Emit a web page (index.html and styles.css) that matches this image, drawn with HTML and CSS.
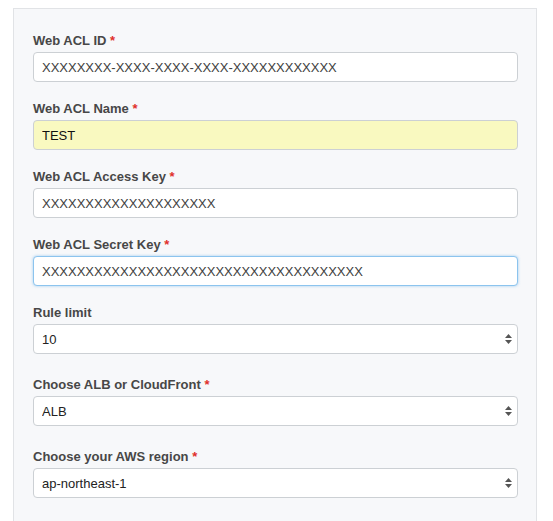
FILE: index.html
```html
<!DOCTYPE html>
<html>
<head>
    <title>Web ACL settings</title>
    <meta http-equiv="Content-Type" content="text/html; charset=utf-8"/>
    <link rel="stylesheet" href="styles.css">
</head>
<body>
<div id="page">
    <form id="aclPanel">
        <div class="field">
            <label>Web ACL ID <span class="req">*</span></label>
            <input class="control" type="text" value="XXXXXXXX-XXXX-XXXX-XXXX-XXXXXXXXXXXX">
        </div>
        <div class="field">
            <label>Web ACL Name <span class="req">*</span></label>
            <input class="control filled" type="text" value="TEST">
        </div>
        <div class="field">
            <label>Web ACL Access Key <span class="req">*</span></label>
            <input class="control" type="text" value="XXXXXXXXXXXXXXXXXXXX">
        </div>
        <div class="field">
            <label>Web ACL Secret Key <span class="req">*</span></label>
            <input class="control focused" type="text" value="XXXXXXXXXXXXXXXXXXXXXXXXXXXXXXXXXXXXX">
        </div>
        <div class="field choice">
            <label>Rule limit</label>
            <select class="control">
                <option>10</option>
            </select>
        </div>
        <div class="field choice">
            <label>Choose ALB or CloudFront <span class="req">*</span></label>
            <select class="control">
                <option>ALB</option>
            </select>
        </div>
        <div class="field choice">
            <label>Choose your AWS region <span class="req">*</span></label>
            <select class="control">
                <option>ap-northeast-1</option>
            </select>
        </div>
    </form>
</div>
</body>
</html>
```

FILE: styles.css
```css
body {
    margin: 0;
    background-color: #fff;
    font-family: "Liberation Sans", Arial, sans-serif;
}

#page {
    padding: 8px 16px 0 13px;
}

#aclPanel {
    background-color: #f7f8fa;
    border: 1px solid #e1e3e6;
    border-bottom: none;
    padding: 24px 18px 20px 19px;
    min-height: 480px;
}

.field {
    display: flex;
    flex-direction: column;
    margin-bottom: 19px;
}

.field.choice {
    margin-bottom: 23px;
}

.field label {
    font-size: 13px;
    font-weight: bold;
    line-height: 16px;
    color: #474747;
    margin-bottom: 3px;
}

.req {
    color: #e0302b;
}

.control {
    box-sizing: border-box;
    height: 30px;
    width: 100%;
    margin: 0;
    padding: 0 8px;
    font-family: "Liberation Sans", Arial, sans-serif;
    font-size: 13px;
    color: #404040;
    background-color: #fff;
    border: 1px solid #ccd0d4;
    border-radius: 4px;
    outline: none;
}

.control.filled {
    background-color: #f9f9c0;
    color: #111;
}

.control.focused {
    border-color: #8cc4ee;
    box-shadow: 0 0 3px rgba(102, 175, 233, 0.6);
}

select.control {
    -webkit-appearance: none;
    appearance: none;
    color: #222;
    background-image: url("data:image/svg+xml,%3Csvg xmlns='http://www.w3.org/2000/svg' width='7' height='12'%3E%3Cpath d='M3.5 1L7 5H0z M0 7h7L3.5 11z' fill='%23555'/%3E%3C/svg%3E");
    background-repeat: no-repeat;
    background-position: right 5px center;
}
```
